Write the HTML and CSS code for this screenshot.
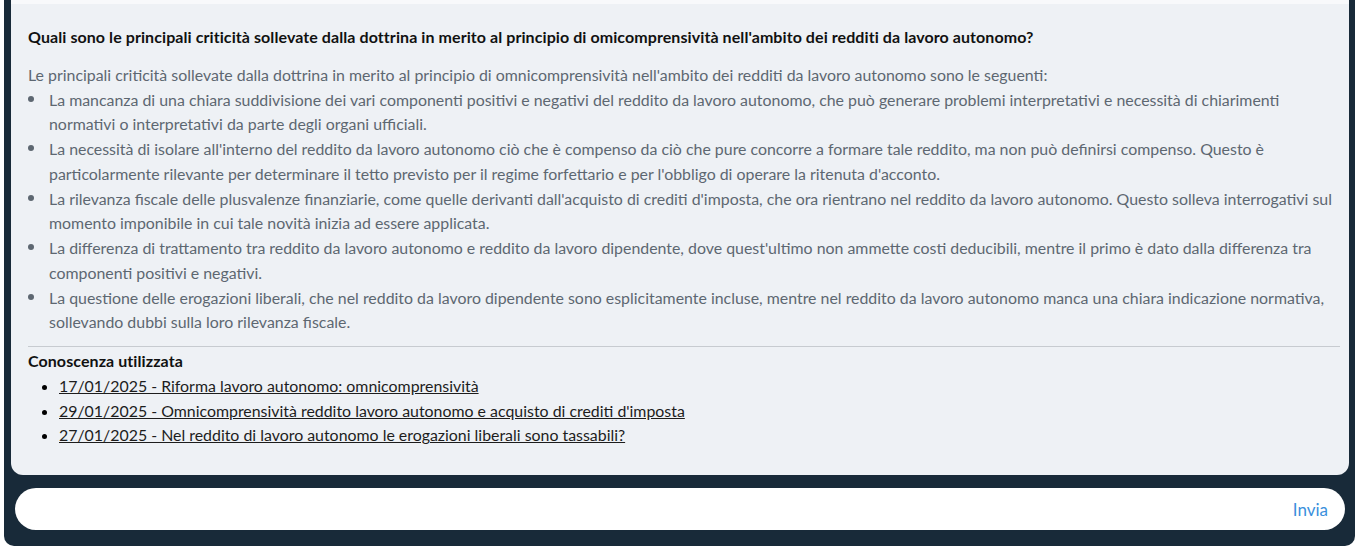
FILE: index.html
```html
<!DOCTYPE html>
<html lang="it">
<head>
<meta charset="utf-8">
<title>Chat</title>
<link rel="stylesheet" href="styles.css">
</head>
<body>
<div class="chat">
  <div class="answer-card">
    <h2 class="question">Quali sono le principali criticità sollevate dalla dottrina in merito al principio di omicomprensività nell'ambito dei redditi da lavoro autonomo?</h2>
    <div class="answer">
      <p class="intro">Le principali criticità sollevate dalla dottrina in merito al principio di omnicomprensività nell'ambito dei redditi da lavoro autonomo sono le seguenti:</p>
      <ul class="points">
        <li>La mancanza di una chiara suddivisione dei vari componenti positivi e negativi del reddito da lavoro autonomo, che può generare problemi interpretativi e necessità di chiarimenti normativi o interpretativi da parte degli organi ufficiali.</li>
        <li>La necessità di isolare all'interno del reddito da lavoro autonomo ciò che è compenso da ciò che pure concorre a formare tale reddito, ma non può definirsi compenso. Questo è particolarmente rilevante per determinare il tetto previsto per il regime forfettario e per l'obbligo di operare la ritenuta d'acconto.</li>
        <li>La rilevanza fiscale delle plusvalenze finanziarie, come quelle derivanti dall'acquisto di crediti d'imposta, che ora rientrano nel reddito da lavoro autonomo. Questo solleva interrogativi sul momento imponibile in cui tale novità inizia ad essere applicata.</li>
        <li>La differenza di trattamento tra reddito da lavoro autonomo e reddito da lavoro dipendente, dove quest'ultimo non ammette costi deducibili, mentre il primo è dato dalla differenza tra componenti positivi e negativi.</li>
        <li>La questione delle erogazioni liberali, che nel reddito da lavoro dipendente sono esplicitamente incluse, mentre nel reddito da lavoro autonomo manca una chiara indicazione normativa, sollevando dubbi sulla loro rilevanza fiscale.</li>
      </ul>
    </div>
    <div class="sources">
      <h3 class="sources-title">Conoscenza utilizzata</h3>
      <ul class="source-list">
        <li><a href="#">17/01/2025 - Riforma lavoro autonomo: omnicomprensività</a></li>
        <li><a href="#">29/01/2025 - Omnicomprensività reddito lavoro autonomo e acquisto di crediti d'imposta</a></li>
        <li><a href="#">27/01/2025 - Nel reddito di lavoro autonomo le erogazioni liberali sono tassabili?</a></li>
      </ul>
    </div>
  </div>
  <form class="composer">
    <input class="composer-input" type="text" aria-label="Messaggio">
    <button class="send" type="button">Invia</button>
  </form>
</div>
</body>
</html>
```

FILE: styles.css
```css
html, body {
  margin: 0;
  padding: 0;
  background: #ffffff;
}

body {
  font-family: "Lato", "Noto Sans", sans-serif;
  font-size: 15.9px;
}

.chat {
  margin: 0 2px 0 4px;
  background: #182a39;
  border-radius: 0 0 10px 10px;
  padding: 0 6px 16px 7px;
  height: 546px;
  box-sizing: border-box;
  display: flex;
  flex-direction: column;
}

.answer-card {
  background: #eef1f5;
  border-top: 4px solid #f8f9fb;
  border-radius: 0 0 12px 12px;
  padding: 21px 9px 27px 17px;
  height: 475px;
  flex: none;
  box-sizing: border-box;
}

.question {
  margin: 0;
  font-size: 16px;
  font-weight: 700;
  letter-spacing: 0.08px;
  line-height: 24.75px;
  color: #111111;
}

.answer {
  margin-top: 13px;
  color: #5d6771;
  line-height: 24.75px;
  padding-bottom: 11px;
  border-bottom: 1px solid #c7cbd0;
}

.intro {
  margin: 0;
}

.points {
  list-style: none;
  margin: 0;
  padding: 0 0 0 21px;
}

.points li {
  position: relative;
}

.points li::before {
  content: "";
  position: absolute;
  left: -21px;
  top: 8px;
  width: 6px;
  height: 6px;
  border-radius: 50%;
  background: #5d6771;
}

.sources {
  padding-top: 2px;
}

.sources-title {
  margin: 0;
  font-size: 16px;
  font-weight: 700;
  letter-spacing: 0.08px;
  line-height: 24.75px;
  color: #111111;
}

.source-list {
  margin: 0;
  padding-left: 31px;
  line-height: 24.75px;
  list-style: disc;
}

.source-list a {
  color: #1d1d1d;
  text-decoration: underline;
}

.composer {
  margin: 13px 4px 0 4px;
  height: 42px;
  flex: none;
  background: #ffffff;
  border-radius: 21px;
  display: flex;
  align-items: center;
  padding: 0 17px 0 20px;
}

.composer-input {
  flex: 1;
  border: none;
  outline: none;
  background: transparent;
  font: inherit;
  height: 100%;
}

.send {
  border: none;
  background: transparent;
  padding: 0;
  color: #3a8fdc;
  font-family: inherit;
  font-size: 17px;
  cursor: pointer;
}
```
